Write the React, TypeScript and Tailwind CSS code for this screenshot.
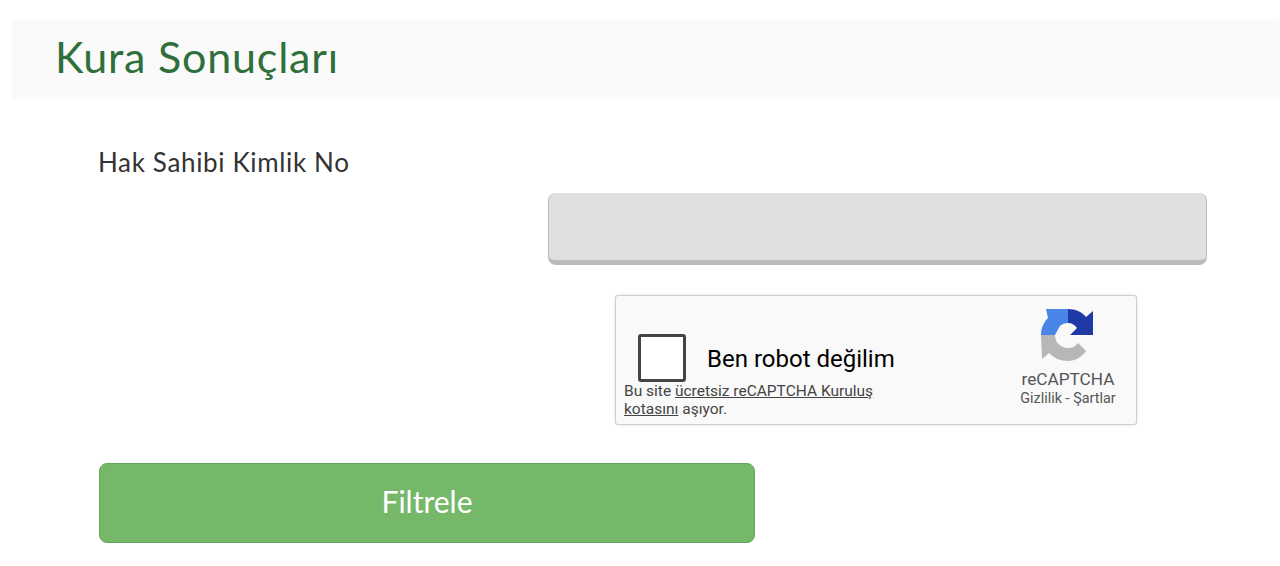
export default function App() {
  return (
    <div className="h-[566px] w-[1280px] overflow-hidden bg-white pt-5 font-['Lato',sans-serif]">
      <div className="ml-3 flex h-[79px] items-center rounded-sm bg-[#fafafa] pl-[43px] pb-[6px]">
        <h1 className="text-[43px] leading-none font-normal tracking-[0.8px] text-[#2f6f3a]">Kura Sonuçları</h1>
      </div>
      <div className="pl-[99px]">
        <label className="mt-[46px] mb-[1px] -ml-px block h-[47px] text-[26px] leading-[34px] tracking-[0.65px] text-[#333333]">Hak Sahibi Kimlik No</label>
        <div className="ml-[449px] h-[72px] w-[659px] rounded-lg border-b-[5px] border-l border-r border-[#bbbbbb] border-t-0 bg-[#e0e0e0]" />
        <div className="mt-[30px] ml-[516px] flex h-[130px] w-[522px] justify-between rounded-[3px] border border-[#cfcfcf] bg-[#f9f9f9] font-['Roboto',sans-serif] shadow-[0_0_3px_rgba(0,0,0,0.15)]">
          <div className="flex flex-col pt-[38px]">
            <div className="ml-[22px] flex items-center">
              <div className="h-12 w-12 rounded-[3px] border-[3px] border-[#444444] bg-white" />
              <span className="mt-[2px] ml-[21px] text-[24px] leading-none text-black">Ben robot değilim</span>
            </div>
            <p className="ml-2 w-[262px] text-[15.5px] leading-[18px] text-[#444444]">
              Bu site <span className="underline">ücretsiz reCAPTCHA Kuruluş kotasını</span> aşıyor.
            </p>
          </div>
          <div className="mr-[19px] flex w-[98px] flex-col items-center pt-3">
            <svg width="54" height="54" viewBox="0 0 54 54">
              <path d="M27 1 C35 1 41 4 45 9 L52 3 L52 27 L29 27 L36 20 C34 17 31 15 27 15 Z" fill="#1f3aa5" />
              <path d="M27 1 L27 15 C24 15 21 16 19 18 L14 27 L0 27 C0 20 3 14 7 10 L5 1 Z" fill="#4a86e8" />
              <path d="M0 27 L14 27 C14 35 20 40 27 40 C31 40 35 38 37 35 L45 43 C41 49 34 53 27 53 C19 53 13 50 8 45 L1 51 Z" fill="#b7b7b7" />
            </svg>
            <div className="mt-[7px] text-[17.2px] leading-5 whitespace-nowrap text-[#555555]">reCAPTCHA</div>
            <div className="text-[14.4px] leading-5 whitespace-nowrap text-[#555555]">Gizlilik - Şartlar</div>
          </div>
        </div>
        <button className="mt-[38px] h-20 w-[656px] rounded-lg border border-[#66a55f] bg-[#75b869] pb-[3px] text-[30px] text-white">Filtrele</button>
      </div>
    </div>
  );
}
